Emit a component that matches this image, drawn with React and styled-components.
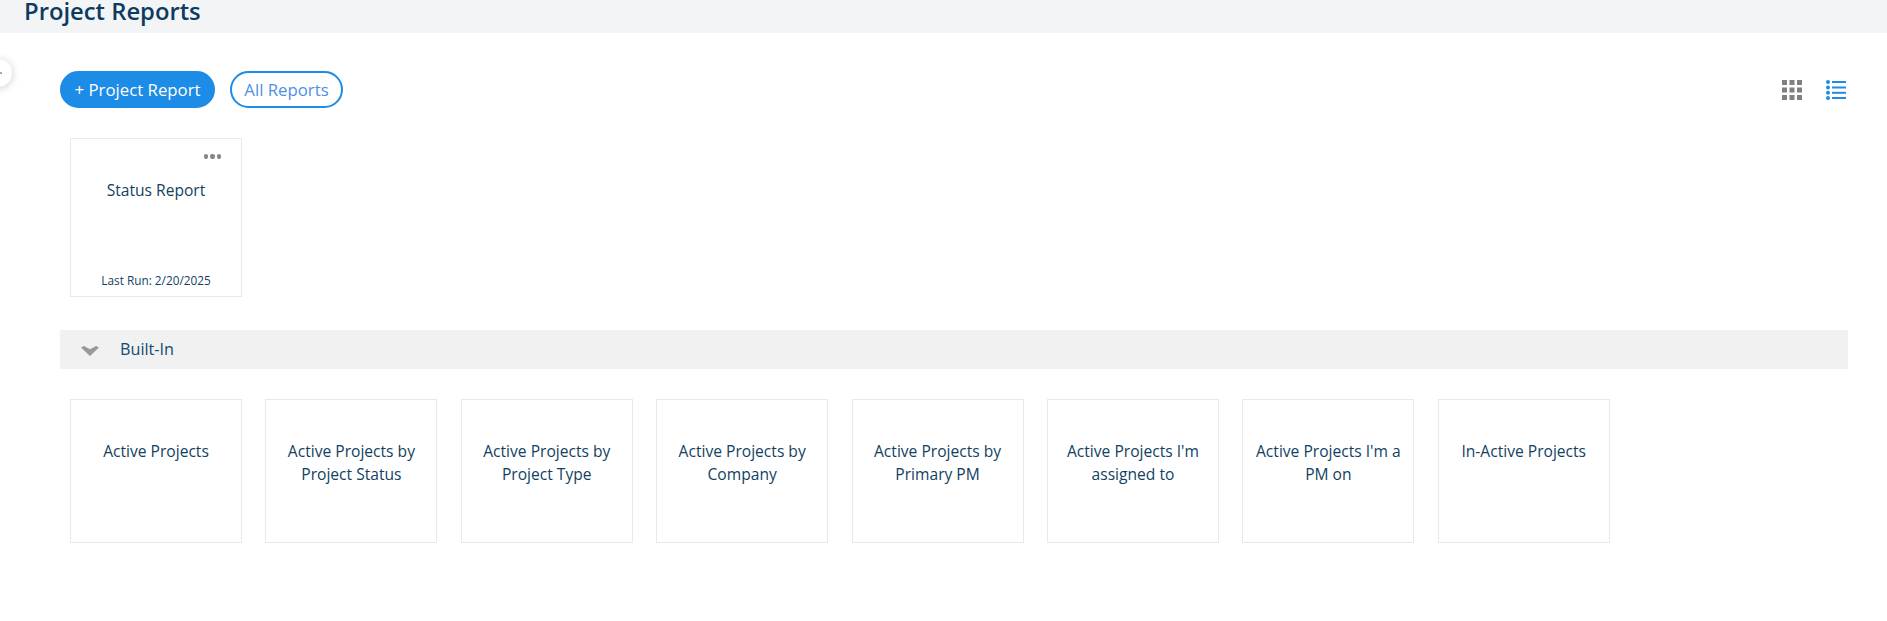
import React from "react";
import styled, { createGlobalStyle } from "styled-components";

const GlobalStyle = createGlobalStyle`
  html, body {
    margin: 0;
    padding: 0;
    background: #fff;
    font-family: "Open Sans", "Liberation Sans", sans-serif;
  }
`;

const Page = styled.div`
  position: relative;
  width: 1887px;
  height: 621px;
  overflow: hidden;
  background: #fff;
`;

const Header = styled.header`
  box-sizing: border-box;
  height: 33px;
  padding: 1px 0 0 24px;
  background: #f3f4f6;
`;

const Title = styled.h1`
  margin: 0;
  font-size: 23.8px;
  line-height: 21px;
  font-weight: 600;
  color: #0d3b60;
`;

const SideToggle = styled.button`
  position: absolute;
  left: -16px;
  top: 59px;
  width: 28px;
  height: 28px;
  padding: 0;
  border: 0;
  border-radius: 50%;
  background: #fff;
  box-shadow: 0 1px 8px rgba(0, 0, 0, 0.2);

  &::after {
    content: "";
    position: absolute;
    left: 16px;
    top: 13px;
    width: 1.5px;
    height: 2px;
    background: #aaaaaa;
  }
`;

const Main = styled.main`
  padding: 38px 39px 0 60px;
`;

const Toolbar = styled.div`
  display: flex;
  align-items: center;
  justify-content: space-between;
  height: 37px;
`;

const ButtonGroup = styled.div`
  display: flex;
  gap: 15px;
`;

const PillButton = styled.button`
  box-sizing: border-box;
  height: 37px;
  width: ${(p) => p.$width}px;
  padding: 0;
  border: 2px solid #1d8ce6;
  border-radius: 19px;
  font-family: inherit;
  font-size: 16.8px;
  background: ${(p) => (p.$filled ? "#1d8ce6" : "#fff")};
  color: ${(p) => (p.$filled ? "#fff" : "#4f8fe6")};
`;

const ViewSwitch = styled.div`
  display: flex;
  align-items: center;
  gap: 24px;
  margin-right: 2px;
`;

const CardRow = styled.div`
  display: flex;
  gap: 23.4px;
  margin-top: ${(p) => p.$top}px;
  padding-left: 10px;
`;

const Card = styled.div`
  position: relative;
  box-sizing: border-box;
  display: flex;
  flex-direction: column;
  width: 172px;
  height: ${(p) => p.$height}px;
  padding: 40px 10px 0;
  border: 1px solid #e9e9e9;
  background: #fff;
  text-align: center;
  font-size: 15.6px;
  line-height: 23px;
  color: #123f62;
`;

const CardFooter = styled.div`
  margin-top: auto;
  padding-bottom: 7px;
  font-size: 11.8px;
  line-height: 17px;
`;

const MoreDots = styled.span`
  position: absolute;
  top: 15px;
  right: 20px;
  display: flex;
  gap: 2px;

  i {
    width: 4.5px;
    height: 4.5px;
    border-radius: 50%;
    background: #858585;
  }
`;

const SectionBar = styled.div`
  display: flex;
  align-items: center;
  gap: 21px;
  height: 39px;
  margin-top: 33px;
  padding-left: 21px;
  background: #f1f1f1;
  font-size: 16.2px;
  color: #124a72;

  svg {
    margin-top: 2px;
  }

  span {
    margin-top: -1px;
  }
`;

const GridIcon = () => (
  <svg width="20" height="20" viewBox="0 0 20 20" fill="#808080">
    {[0, 7.5, 15].map((y) =>
      [0, 7.5, 15].map((x) => <rect key={`${x}-${y}`} x={x} y={y} width="5" height="5" />)
    )}
  </svg>
);

const ListIcon = () => (
  <svg width="20" height="20" viewBox="0 0 20 20" fill="#1d8ce6">
    {[2, 7.5, 12.8, 18].map((y) => (
      <g key={y}>
        <circle cx="2" cy={y} r="2" />
        <rect x="6" y={y - 1} width="14" height="2" />
      </g>
    ))}
  </svg>
);

const ChevronIcon = () => (
  <svg width="18" height="10" viewBox="0 0 18 10" fill="#999999">
    <path d="M0 1.5 L3 0 L9 3.2 L15 0 L18 1.5 L9 10 Z" />
  </svg>
);

const builtIn = [
  "Active Projects",
  "Active Projects by Project Status",
  "Active Projects by Project Type",
  "Active Projects by Company",
  "Active Projects by Primary PM",
  "Active Projects I'm assigned to",
  "Active Projects I'm a PM on",
  "In-Active Projects",
];

const App = () => {
  return (
    <Page>
      <GlobalStyle />
      <Header>
        <Title>Project Reports</Title>
      </Header>
      <SideToggle aria-label="Toggle sidebar" />
      <Main>
        <Toolbar>
          <ButtonGroup>
            <PillButton $filled $width={155}>+ Project Report</PillButton>
            <PillButton $width={113}>All Reports</PillButton>
          </ButtonGroup>
          <ViewSwitch>
            <GridIcon />
            <ListIcon />
          </ViewSwitch>
        </Toolbar>
        <CardRow $top={30}>
          <Card $height={159}>
            <MoreDots>
              <i />
              <i />
              <i />
            </MoreDots>
            Status Report
            <CardFooter>Last Run: 2/20/2025</CardFooter>
          </Card>
        </CardRow>
        <SectionBar>
          <ChevronIcon />
          <span>Built-In</span>
        </SectionBar>
        <CardRow $top={30}>
          {builtIn.map((name) => (
            <Card key={name} $height={144}>
              {name}
            </Card>
          ))}
        </CardRow>
      </Main>
    </Page>
  );
};

export default App;
